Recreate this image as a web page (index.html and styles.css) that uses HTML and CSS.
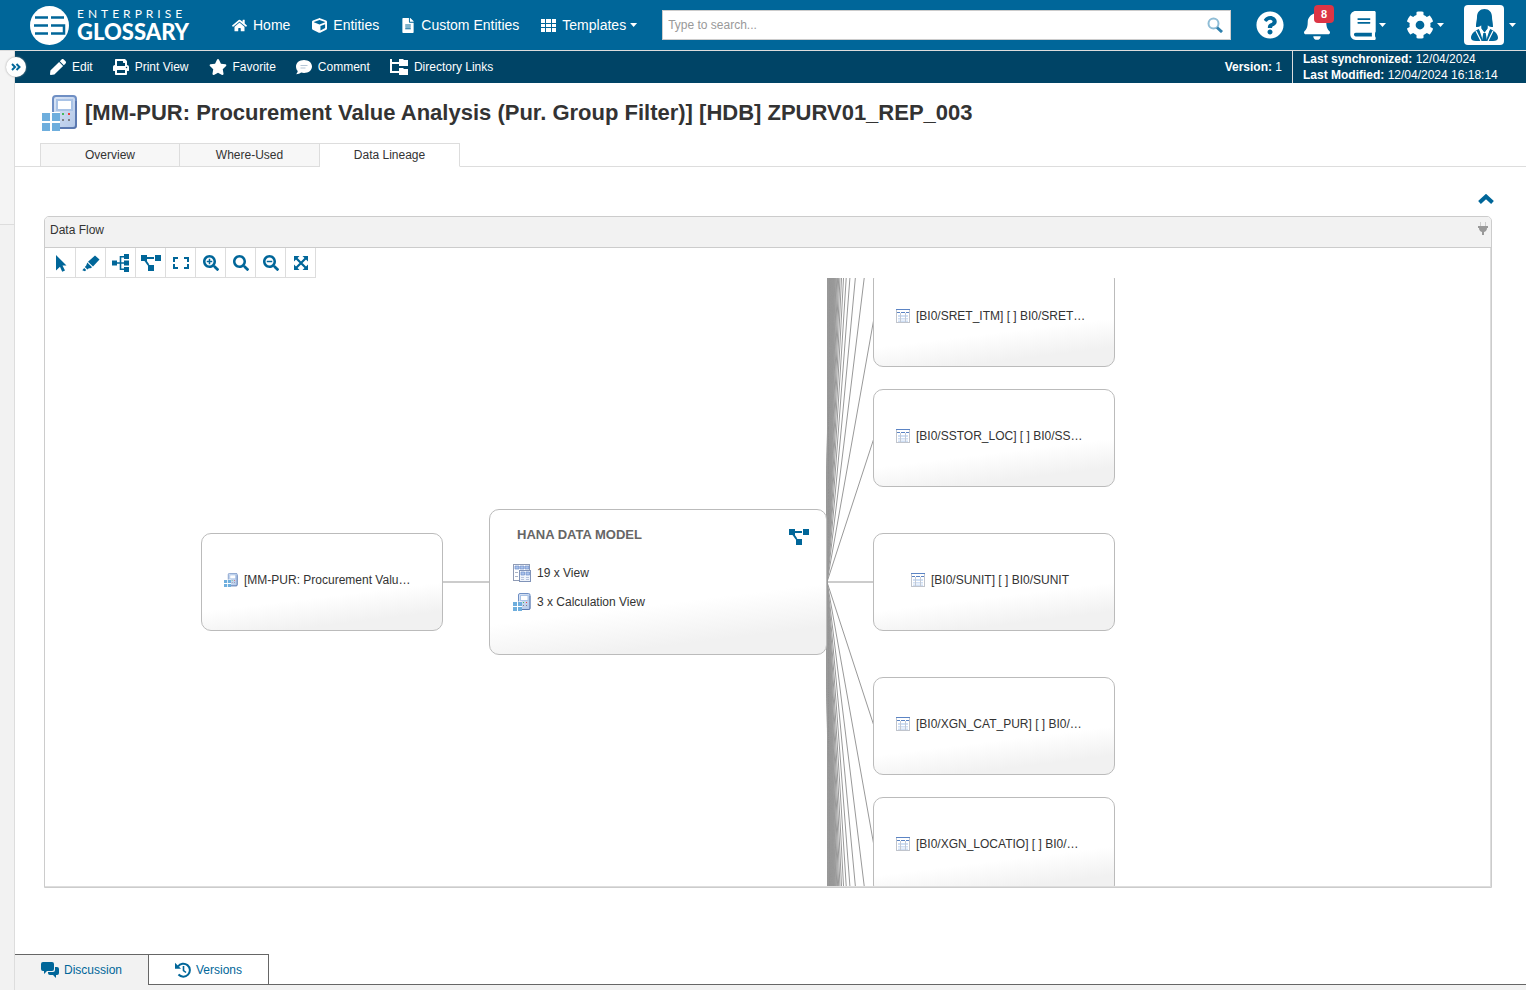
FILE: index.html
```html
<!DOCTYPE html>
<html lang="en">
<head>
<meta charset="utf-8">
<title>Enterprise Glossary - Data Lineage</title>
<link rel="stylesheet" href="styles.css">
</head>
<body>
<svg class="sprite" aria-hidden="true">
  <symbol id="i-calc" viewBox="0 0 36 36">
    <linearGradient id="calc-fill" x1="0" y1="0" x2="1" y2="1"><stop offset="0" stop-color="#dbe5f5"/><stop offset="1" stop-color="#b3c8e8"/></linearGradient>
    <rect x="11" y="1" width="23" height="32" rx="3" fill="url(#calc-fill)" stroke="#6f8fc4" stroke-width="2"/>
    <path d="M34 6V31a2 2 0 0 1-2 2H18" fill="none" stroke="#5673ab" stroke-width="1.500"/>
    <rect x="15" y="5" width="15" height="10" fill="#fff" stroke="#a9c3e6" stroke-width="2"/>
    <path d="M20 18h2v2h-2z" fill="#46b95c"/><path d="M26 18h2v2h-2z" fill="#ee3d3d"/>
    <path d="M20 24h2v2h-2zM26 24h2v2h-2z" fill="#7d8088"/>
    <path d="M0 17h18v18H0z" fill="#fff"/>
    <path d="M0 18h8v8H0zM10 18h8v8h-8zM0 28h8v8H0zM10 28h8v8h-8z" fill="#6eaedd"/>
  </symbol>
  <symbol id="i-table" viewBox="0 0 14 14">
    <rect x=".5" y=".5" width="13" height="13" fill="#fff" stroke="#c0c4cc"/>
    <path d="M0 0h14v1H0z" fill="#5b84c4"/><path d="M1 3h3v1H1zM5 3h4v1H5zM10 3h3v1h-3z" fill="#5b84c4"/>
    <path d="M2 6h2v7H2zM5 6h4v7H5zM10 6h2v7h-2z" fill="#cfdff5"/>
    <path d="M1 8.500h12M1 11h12" stroke="#fff"/><path d="M4.500 4v9M9.500 4v9" stroke="#c3c9d4"/>
  </symbol>
  <symbol id="i-view" viewBox="0 0 18 18">
    <rect x=".5" y=".5" width="16" height="16" fill="#fff" stroke="#8f9bb5"/>
    <path d="M2 2h4v3H2zM7 2h4v3H7zM12 2h4v3h-4z" fill="#a9c1ea" stroke="#6f90cb" stroke-width=".7"/>
    <path d="M2 8.500h3M2 12.500h3" stroke="#a9b3c6"/>
    <rect x="6.500" y="6.500" width="11" height="11" fill="#eef3fb" stroke="#8093b8"/>
    <path d="M8 8h3.500v3H8zM13 8h3.500v3H13z" fill="#a9c1ea" stroke="#6f90cb" stroke-width=".7"/>
    <path d="M8 13.500h3M8 15.500h3M13 13.500h3M13 15.500h3" stroke="#b6c3dc"/>
  </symbol>
  <symbol id="i-diagram" viewBox="0 0 20 18">
    <path d="M0 1h6v6H0zM14 1h6v6h-6zM7 11h6v6H7zM6 3h7v2H6z"/><path d="M4 6l3.500 5" stroke="currentColor" stroke-width="2"/>
  </symbol>
  <symbol id="i-search" viewBox="0 0 512 512"><path d="M505 442.700L405.300 343c-4.500-4.500-10.600-7-17-7H372c27.600-35.300 44-79.700 44-128C416 93.100 322.900 0 208 0S0 93.100 0 208s93.100 208 208 208c48.300 0 92.700-16.400 128-44v16.300c0 6.400 2.500 12.500 7 17l99.700 99.700c9.400 9.400 24.600 9.400 33.900 0l28.300-28.300c9.400-9.400 9.400-24.600.1-34zM208 336c-70.700 0-128-57.200-128-128 0-70.700 57.200-128 128-128 70.700 0 128 57.200 128 128 0 70.700-57.200 128-128 128z"/></symbol>
</svg>

<header class="topbar">
  <a class="brand" href="#" aria-label="Enterprise Glossary">
    <svg class="brand-mark" viewBox="0 0 39 39" aria-hidden="true">
      <circle cx="19.500" cy="19.500" r="19.500" fill="#fff"/>
      <path d="M5 11.500H18M4 19.500H18M5 27.500H18M21 11.500H34M21 19.500H34V27.500H21" fill="none" stroke="#006699" stroke-width="2.500"/>
    </svg>
    <span class="brand-text"><span class="brand-top">ENTERPRISE</span><span class="brand-bottom">GLOSSARY</span></span>
  </a>
  <nav class="nav" aria-label="Main">
    <a class="nav-link" href="#"><svg class="icon-15" viewBox="0 0 576 512" aria-hidden="true"><path d="M280.370 148.260L96 300.110V464a16 16 0 0 0 16 16l112.060-.29a16 16 0 0 0 15.920-16V368a16 16 0 0 1 16-16h64a16 16 0 0 1 16 16v95.640a16 16 0 0 0 16 16.050L464 480a16 16 0 0 0 16-16V300L295.670 148.260a12.190 12.190 0 0 0-15.300 0zM571.600 251.470L488 182.560V44.050a12 12 0 0 0-12-12h-56a12 12 0 0 0-12 12v72.610L318.470 43a48 48 0 0 0-61 0L4.340 251.470a12 12 0 0 0-1.600 16.900l25.500 31A12 12 0 0 0 45.150 301l235.220-193.740a12.190 12.190 0 0 1 15.300 0L530.900 301a12 12 0 0 0 16.900-1.600l25.500-31a12 12 0 0 0-1.700-16.930z"/></svg>Home</a>
    <a class="nav-link" href="#"><svg class="icon-15" viewBox="0 0 512 512" aria-hidden="true"><path d="M239.100 6.300l-208 78c-18.700 7-31.100 25-31.100 45v225.100c0 18.200 10.300 34.800 26.500 42.900l208 104c13.500 6.800 29.400 6.800 42.900 0l208-104c16.300-8.100 26.500-24.800 26.500-42.900V129.300c0-20-12.400-37.900-31.100-44.900l-208-78C262 2.200 250 2.200 239.100 6.300zM256 68.400l192 72v1.100l-192 78-192-78v-1.100l192-72zm32 356V275.500l160-65v133.900l-160 80z"/></svg>Entities</a>
    <a class="nav-link" href="#"><svg class="icon-file" viewBox="0 0 384 512" aria-hidden="true"><path d="M224 136V0H24C10.700 0 0 10.700 0 24v464c0 13.300 10.700 24 24 24h336c13.300 0 24-10.700 24-24V160H248c-13.200 0-24-10.800-24-24zm64 236c0 6.600-5.400 12-12 12H108c-6.600 0-12-5.400-12-12v-8c0-6.600 5.400-12 12-12h168c6.600 0 12 5.400 12 12v8zm0-64c0 6.600-5.400 12-12 12H108c-6.600 0-12-5.400-12-12v-8c0-6.600 5.400-12 12-12h168c6.600 0 12 5.400 12 12v8zm0-72v8c0 6.600-5.400 12-12 12H108c-6.600 0-12-5.400-12-12v-8c0-6.600 5.400-12 12-12h168c6.600 0 12 5.400 12 12zm96-114.100v6.100H256V0h6.100c6.400 0 12.500 2.500 17 7l97.900 98c4.500 4.500 7 10.600 7 16.900z"/></svg>Custom Entities</a>
    <button class="nav-link" type="button"><svg class="icon-15" viewBox="0 0 15 15" aria-hidden="true"><path d="M0 1h4v4H0zM5 1h5v4H5zM11 1h4v4h-4zM0 6h4v3H0zM5 6h5v3H5zM11 6h4v3h-4zM0 10h4v4H0zM5 10h5v4H5zM11 10h4v4h-4z"/></svg><span class="nav-drop">Templates<span class="caret"></span></span></button>
  </nav>
  <form class="search">
    <input class="search-input" type="search" placeholder="Type to search..." aria-label="Search">
    <button class="search-button" type="button" aria-label="Search"><svg class="icon-16" viewBox="0 0 16 16" aria-hidden="true"><circle cx="6.500" cy="6.500" r="5" fill="none" stroke="#8fbdd6" stroke-width="2"/><path d="M10 10.500l5 4.500" stroke="#2f80ad" stroke-width="3"/></svg></button>
  </form>
  <div class="tools">
    <button class="tool" type="button" aria-label="Help"><svg class="icon-28" viewBox="0 0 512 512" aria-hidden="true"><path d="M504 256c0 136.997-111.043 248-248 248S8 392.997 8 256C8 119.083 119.043 8 256 8s248 111.083 248 248zM262.655 90c-54.497 0-89.255 22.957-116.549 63.758-3.536 5.286-2.353 12.415 2.715 16.258l34.699 26.310c5.205 3.947 12.621 3.008 16.665-2.122 17.864-22.658 30.113-35.797 57.303-35.797 20.429 0 45.698 13.148 45.698 32.958 0 14.976-12.363 22.667-32.534 33.976C247.128 238.528 216 254.941 216 296v4c0 6.627 5.373 12 12 12h56c6.627 0 12-5.373 12-12v-1.333c0-28.462 83.186-29.647 83.186-106.667 0-58.002-60.165-102-116.531-102zM256 338c-25.365 0-46 20.635-46 46 0 25.364 20.635 46 46 46s46-20.636 46-46c0-25.365-20.635-46-46-46z"/></svg></button>
    <button class="tool tool-bell" type="button" aria-label="Notifications"><svg class="icon-bell" viewBox="0 0 448 512" aria-hidden="true"><path d="M224 512c35.320 0 63.970-28.650 63.970-64H160.030c0 35.350 28.650 64 63.970 64zm215.390-149.710c-19.320-20.760-55.470-51.990-55.470-154.290 0-77.700-54.480-139.900-127.940-155.160V32c0-17.670-14.320-32-31.980-32s-31.980 14.330-31.980 32v20.840C118.560 68.100 64.080 130.300 64.080 208c0 102.300-36.150 133.530-55.470 154.290-6 6.450-8.660 14.160-8.610 21.710.11 16.400 12.980 32 32.100 32h383.800c19.120 0 32-15.600 32.100-32 .05-7.550-2.610-15.270-8.610-21.710z"/></svg><span class="count">8</span></button>
    <button class="tool" type="button" aria-label="Library"><svg class="icon-book" viewBox="0 0 448 512" aria-hidden="true"><path d="M448 360V24c0-13.300-10.700-24-24-24H96C43 0 0 43 0 96v320c0 53 43 96 96 96h328c13.300 0 24-10.700 24-24v-16c0-7.500-3.500-14.300-8.900-18.700-4.200-15.400-4.200-59.300 0-74.700 5.400-4.300 8.900-11.100 8.900-18.600zM128 134c0-3.300 2.700-6 6-6h212c3.300 0 6 2.700 6 6v20c0 3.300-2.700 6-6 6H134c-3.300 0-6-2.700-6-6v-20zm0 64c0-3.300 2.700-6 6-6h212c3.300 0 6 2.700 6 6v20c0 3.300-2.700 6-6 6H134c-3.300 0-6-2.700-6-6v-20zm253.400 250H96c-17.700 0-32-14.300-32-32 0-17.600 14.400-32 32-32h285.400c-1.900 17.100-1.900 46.900 0 64z"/></svg><span class="caret"></span></button>
    <button class="tool" type="button" aria-label="Settings"><svg class="icon-28" viewBox="0 0 512 512" aria-hidden="true"><path d="M487.400 315.700l-42.600-24.600c4.300-23.200 4.300-47 0-70.200l42.600-24.600c4.900-2.800 7.100-8.600 5.500-14-11.100-35.600-30-67.800-54.700-94.600-3.800-4.100-10-5.100-14.800-2.300L380.800 110c-17.900-15.400-38.500-27.300-60.800-35.100V25.800c0-5.600-3.900-10.500-9.400-11.700-36.700-8.200-74.300-7.800-109.200 0-5.500 1.200-9.400 6.100-9.400 11.700V75c-22.200 7.900-42.800 19.800-60.800 35.100L88.700 85.500c-4.900-2.800-11-1.900-14.800 2.300-24.700 26.700-43.600 58.900-54.700 94.600-1.700 5.400.6 11.200 5.500 14L67.300 221c-4.300 23.200-4.300 47 0 70.200l-42.600 24.600c-4.900 2.800-7.100 8.600-5.500 14 11.100 35.600 30 67.800 54.700 94.600 3.800 4.100 10 5.100 14.800 2.300l42.600-24.600c17.900 15.400 38.500 27.300 60.800 35.100v49.200c0 5.600 3.900 10.500 9.400 11.700 36.700 8.200 74.300 7.800 109.200 0 5.500-1.200 9.400-6.100 9.400-11.700v-49.200c22.200-7.900 42.800-19.800 60.800-35.100l42.600 24.600c4.900 2.800 11 1.900 14.800-2.300 24.700-26.700 43.600-58.900 54.700-94.600 1.500-5.500-.7-11.300-5.600-14.100zM256 336c-44.100 0-80-35.900-80-80s35.900-80 80-80 80 35.900 80 80-35.900 80-80 80z"/></svg><span class="caret"></span></button>
    <button class="tool" type="button" aria-label="Account"><svg class="avatar" viewBox="0 0 40 40" aria-hidden="true">
      <rect width="40" height="40" rx="4" fill="#fff"/>
      <path d="M12 22c0-5 1-7 1-10 0-5 3-8 7.500-8S28 7 28 12c0 3 1 5 1 10-2 0-4 0-5-1.500h-7C16 22 14 22 12 22z" fill="#006699"/>
      <path d="M17.500 20h6v4.500l-3 4-3-4z" fill="#006699"/>
      <path d="M15 24l6 12h-9c-3 0-5-1-5-3 0-4 3-7 8-9zM26 24l-6 12h9c3 0 5-1 5-3 0-4-3-7-8-9z" fill="#006699"/>
      <path d="M15 23.500L19 36h3l4-12.500-2-1-3.500 5-3.500-5z" fill="#fff"/><path d="M19.300 28h2.400l1.300 8h-5z" fill="#006699"/><path d="M17.500 20h6v3.500l-3 4-3-4z" fill="#006699"/>
      <path d="M12 26l5 10M29 26l-5 10" stroke="#fff" stroke-width="1.200"/>
    </svg><span class="caret"></span></button>
  </div>
</header>

<div class="shell">
  <aside class="rail"><button class="rail-toggle" type="button" aria-label="Expand sidebar"><svg viewBox="0 0 10 8" aria-hidden="true"><path d="M1 1l3 3-3 3M5.500 1l3 3-3 3"/></svg></button></aside>
  <div class="page">
    <div class="actions">
      <div class="action-list">
        <button class="action" type="button"><svg class="icon-16" viewBox="0 0 512 512" aria-hidden="true"><path d="M290.740 93.240l128.020 128.020-277.990 277.990-114.140 12.600C11.350 513.540-1.560 500.620.140 485.340l12.700-114.220 277.900-277.880zm207.200-19.060l-60.110-60.110c-18.750-18.750-49.160-18.750-67.910 0l-56.550 56.550 128.020 128.020 56.550-56.550c18.750-18.760 18.750-49.160 0-67.910z"/></svg>Edit</button>
        <button class="action" type="button"><svg class="icon-16" viewBox="0 0 512 512" aria-hidden="true"><path d="M448 192V77.250c0-8.490-3.370-16.620-9.370-22.630L393.370 9.370c-6-6-14.140-9.370-22.630-9.370H96C78.330 0 64 14.330 64 32v160c-35.350 0-64 28.650-64 64v112c0 8.840 7.160 16 16 16h48v96c0 17.670 14.330 32 32 32h320c17.670 0 32-14.330 32-32v-96h48c8.840 0 16-7.160 16-16V256c0-35.350-28.650-64-64-64zm-64 256H128v-96h256v96zm0-224H128V64h192v48c0 8.840 7.160 16 16 16h48v96zm48 72c-13.250 0-24-10.750-24-24 0-13.260 10.750-24 24-24s24 10.740 24 24c0 13.250-10.750 24-24 24z"/></svg>Print View</button>
        <button class="action" type="button"><svg class="icon-18" viewBox="0 0 576 512" aria-hidden="true"><path d="M259.300 17.800L194 150.200 47.900 171.500c-26.200 3.800-36.700 36.100-17.700 54.600l105.700 103-25 145.500c-4.500 26.300 23.200 46 46.400 33.700L288 439.600l130.700 68.700c23.200 12.200 50.900-7.400 46.400-33.700l-25-145.500 105.700-103c19-18.500 8.500-50.800-17.700-54.600L382 150.200 316.700 17.800c-11.700-23.600-45.600-23.900-57.400 0z"/></svg>Favorite</button>
        <button class="action" type="button"><svg class="icon-16" viewBox="0 0 16 16" aria-hidden="true"><path d="M8 1c4.600 0 8 2.800 8 6.500S12.600 14 8 14c-1 0-2-.1-2.900-.4C3.800 14.500 2 15.200.200 15.200c.900-1 1.500-2.100 1.600-3.100C.600 10.900 0 9.300 0 7.500 0 3.800 3.400 1 8 1z"/><path d="M4.500 6.500h7M4.500 9h5" stroke="#b5c6d6" stroke-width="1"/></svg>Comment</button>
        <button class="action" type="button"><svg class="icon-18" viewBox="0 0 18 16" aria-hidden="true"><path d="M0 0h2v3h7v2H2v7h7v2H0zM9 0h4l1 1h4v6H9zM9 9h4l1 1h4v6H9z"/></svg>Directory Links</button>
      </div>
      <div class="version"><b>Version:</b> 1</div>
      <div class="stamps"><div><b>Last synchronized:</b> 12/04/2024</div><div><b>Last Modified:</b> 12/04/2024 16:18:14</div></div>
    </div>

    <div class="title-row">
      <svg class="icon-36" aria-hidden="true"><use href="#i-calc"/></svg>
      <h1 class="title">[MM-PUR: Procurement Value Analysis (Pur. Group Filter)] [HDB] ZPURV01_REP_003</h1>
    </div>
    <div class="tabs" role="tablist">
      <button class="tab" type="button" role="tab">Overview</button>
      <button class="tab" type="button" role="tab">Where-Used</button>
      <button class="tab tab-active" type="button" role="tab" aria-selected="true">Data Lineage</button>
    </div>

    <main class="content">
      <button class="collapse" type="button" aria-label="Collapse"><svg viewBox="0 0 16 10" aria-hidden="true"><path d="M1.500 8.500L8 2.500l6.500 6"/></svg></button>
      <section class="panel">
        <div class="panel-head"><h2 class="panel-title">Data Flow</h2>
          <button class="plug" type="button" aria-label="Connection"><svg viewBox="0 0 10 13" aria-hidden="true"><path d="M2 0h1v4H2zM7 0h1v4H7z" fill="#ccc"/><path d="M0 4h10v2H9c0 2-1 3.500-3 4v3H4v-3C2 9.500 1 8 1 6H0z" fill="#999"/></svg></button></div>
        <div class="toolbar">
          <button class="tb" type="button" aria-label="Select"><svg viewBox="0 0 18 18" aria-hidden="true"><path d="M4 1l10.500 10.500H10.500L13 16.500 10.200 17.800 8 12.700 4 16.500z"/></svg></button>
          <button class="tb" type="button" aria-label="Highlight"><svg viewBox="0 0 18 18" aria-hidden="true"><path d="M13 1.500l4.500 4-6.500 7-5-4.800zM5.300 8.600l4.800 4.700-1.600 1-1.700-.1-1.300 1.400-2.700-2.600 1.400-1.400zM2.200 14l2 2-1.200 1.200-2.700-.9z"/></svg></button>
          <button class="tb" type="button" aria-label="Tree layout"><svg viewBox="0 0 18 18" aria-hidden="true"><path d="M0 6.500h5v5H0zM12 0h5v5h-5zM12 6.500h5v5h-5zM12 13h5v5h-5zM5 8.200h7v1.600H5zM7.700 2h1.600v14H7.700zM9 2h3v1.500H9zM9 14.500h3V16H9z"/></svg></button>
          <button class="tb" type="button" aria-label="Diagram layout"><svg class="wide" aria-hidden="true"><use href="#i-diagram"/></svg></button>
          <button class="tb" type="button" aria-label="Fit to window"><svg viewBox="0 0 18 18" aria-hidden="true"><path d="M1 3h5v2H3v3H1zM12 3h5v5h-2V5h-3zM1 10h2v3h3v2H1zM15 10h2v5h-5v-2h3z"/></svg></button>
          <button class="tb" type="button" aria-label="Zoom in"><svg viewBox="-32 -32 576 576" aria-hidden="true"><use href="#i-search" width="512" height="512"/><path d="M184 120h48v64h64v48h-64v64h-48v-64h-64v-48h64z"/></svg></button>
          <button class="tb" type="button" aria-label="Reset zoom"><svg viewBox="-32 -32 576 576" aria-hidden="true"><use href="#i-search" width="512" height="512"/></svg></button>
          <button class="tb" type="button" aria-label="Zoom out"><svg viewBox="-32 -32 576 576" aria-hidden="true"><use href="#i-search" width="512" height="512"/><path d="M120 184h176v48H120z"/></svg></button>
          <button class="tb" type="button" aria-label="Full screen"><svg viewBox="0 0 18 18" aria-hidden="true"><path d="M2 2h5.500L2 7.500zM16 2v5.500L10.500 2zM2 16v-5.500L7.500 16zM16 16h-5.500l5.500-5.500z"/><path d="M4 4l10 10M14 4L4 14" stroke="currentColor" stroke-width="2.200"/></svg></button>
        </div>
        <div class="canvas">
          <svg class="links" aria-hidden="true"></svg>
          <div class="node node-source"><svg class="icon-14" aria-hidden="true"><use href="#i-calc"/></svg>[MM-PUR: Procurement Valu…</div>
          <div class="model">
            <div class="model-head"><h3 class="model-title">HANA DATA MODEL</h3><svg class="model-icon" aria-hidden="true"><use href="#i-diagram"/></svg></div>
            <div class="model-row"><svg class="icon-18" aria-hidden="true"><use href="#i-view"/></svg>19 x View</div>
            <div class="model-row"><svg class="icon-18" aria-hidden="true"><use href="#i-calc"/></svg>3 x Calculation View</div>
          </div>
          <div class="node target-1"><svg class="icon-14" aria-hidden="true"><use href="#i-table"/></svg>[BI0/SRET_ITM] [ ] BI0/SRET…</div>
          <div class="node target-2"><svg class="icon-14" aria-hidden="true"><use href="#i-table"/></svg>[BI0/SSTOR_LOC] [ ] BI0/SS…</div>
          <div class="node node-short target-3"><svg class="icon-14" aria-hidden="true"><use href="#i-table"/></svg>[BI0/SUNIT] [ ] BI0/SUNIT</div>
          <div class="node target-4"><svg class="icon-14" aria-hidden="true"><use href="#i-table"/></svg>[BI0/XGN_CAT_PUR] [ ] BI0/…</div>
          <div class="node target-5"><svg class="icon-14" aria-hidden="true"><use href="#i-table"/></svg>[BI0/XGN_LOCATIO] [ ] BI0/…</div>
        </div>
      </section>
    </main>

    <footer class="dock">
      <button class="dock-tab" type="button"><svg class="icon-18" viewBox="0 0 18 16" aria-hidden="true"><path d="M2 0h9a2 2 0 0 1 2 2v5a2 2 0 0 1-2 2H6l-3 3V9H2a2 2 0 0 1-2-2V2a2 2 0 0 1 2-2z"/><path d="M14 5h2a2 2 0 0 1 2 2v4a2 2 0 0 1-2 2h-1v3l-3-3H9a2 2 0 0 1-2-2v-1h5a2 2 0 0 0 2-2z"/></svg>Discussion</button>
      <button class="dock-tab dock-tab-boxed" type="button"><svg class="icon-16" viewBox="0 0 16 16" aria-hidden="true"><path d="M3 4.500A6.500 6.500 0 1 1 3.500 12.500" fill="none" stroke="currentColor" stroke-width="2"/><path d="M0 .8v6h6z"/><path d="M8.500 4v4.500l2.500 2" fill="none" stroke="currentColor" stroke-width="1.600"/></svg>Versions</button>
    </footer>
  </div>
</div>
<script src="links.js"></script>
</body>
</html>
```
FILE: styles.css
```css
* { box-sizing: border-box; }
body { margin: 0; min-height: 100vh; display: flex; flex-direction: column; background: #fff; color: #333; font: 12px/16px "Liberation Sans", Arial, sans-serif; }
button { margin: 0; padding: 0; border: 0; background: none; color: inherit; font: inherit; cursor: pointer; }
a { color: inherit; text-decoration: none; }
h1, h2, h3 { margin: 0; }
svg { display: block; flex: none; fill: currentColor; }
.sprite { position: absolute; width: 0; height: 0; }
.icon-14 { width: 14px; height: 14px; }
.icon-15 { width: 15px; height: 15px; }
.icon-16 { width: 16px; height: 16px; }
.icon-18 { width: 18px; height: 18px; }
.icon-28 { width: 28px; height: 28px; }
.icon-36 { width: 36px; height: 36px; }
.icon-file { width: 14px; height: 15px; }
.icon-bell { width: 26px; height: 30px; }
.icon-book { width: 26px; height: 29px; }
.caret { width: 7px; height: 4px; background: currentColor; clip-path: polygon(0 0, 100% 0, 50% 100%); }

.topbar { display: flex; align-items: center; height: 50px; padding: 0 10px 0 30px; background: #006699; color: #fff; }
.brand { display: flex; align-items: center; gap: 8px; width: 202px; }
.brand-mark { width: 39px; height: 39px; }
.brand-text { display: flex; flex-direction: column; font-family: Lato, sans-serif; }
.brand-top { font-size: 12px; line-height: 14px; letter-spacing: 4px; }
.brand-bottom { font-size: 22px; line-height: 22px; font-weight: 900; }
.nav { display: flex; align-items: center; gap: 22px; font-size: 14px; }
.nav-link { display: flex; align-items: center; gap: 6px; }
.nav-drop { display: flex; align-items: center; gap: 4px; }
.search { display: flex; flex: 1; height: 30px; margin: 0 25px; background: #fff; border: 1px solid #ccc; }
.search-input { flex: 1; min-width: 0; border: 0; padding: 0 5px; outline: 0; background: none; font: inherit; color: #333; appearance: none; }
.search-input::placeholder { color: #999; }
.search-button { display: grid; place-items: center; width: 30px; }
.tools { display: flex; align-items: center; gap: 20px; }
.tool { display: flex; align-items: center; gap: 3px; }
.tool-bell { position: relative; }
.count { position: absolute; top: -5px; right: -4px; width: 20px; height: 18px; border-radius: 4px; background: #dc3545; font-size: 11px; line-height: 18px; font-weight: bold; }
.avatar { width: 40px; height: 40px; margin-right: 2px; }

.shell { display: flex; flex: 1; border-top: 1px solid #ddd; }
.rail { position: relative; width: 15px; background: linear-gradient(#f4f4f4 173px, #ddd 173px, #ddd 174px, #f2f2f2 174px); border-right: 1px solid #ddd; }
.rail-toggle { position: absolute; z-index: 1; top: 6px; left: 6px; display: grid; place-items: center; width: 20px; height: 20px; border-radius: 50%; background: #fff; color: #006699; box-shadow: 0 0 2px #999; }
.rail-toggle svg { width: 10px; height: 8px; fill: none; stroke: currentColor; stroke-width: 2; }
.page { display: flex; flex: 1; flex-direction: column; min-width: 0; }

.actions { display: flex; align-items: center; height: 32px; padding-left: 35px; background: #004466; color: #fff; }
.action-list { display: flex; flex: 1; gap: 20px; }
.action { display: flex; align-items: center; gap: 6px; }
.version { padding-right: 10px; }
.stamps { width: 234px; height: 32px; padding-left: 10px; border-left: 1px solid #ddd; }

.title-row { display: flex; align-items: center; gap: 7px; padding: 12px 27px; }
.title { font-size: 22px; line-height: 34px; }
.tabs { display: flex; padding-left: 25px; box-shadow: inset 0 -1px #ddd; }
.tab { width: 140px; height: 24px; background: #f7f7f7; border: 1px solid #ddd; border-left: 0; }
.tab:first-child { border-left: 1px solid #ddd; }
.tab-active { background: #fff; border-bottom-color: #fff; }

.content { display: flex; flex: 1; flex-direction: column; padding: 25px 34px 66px 29px; }
.collapse { align-self: flex-end; height: 24px; margin-right: -2px; color: #006699; }
.collapse svg { width: 16px; height: 10px; margin-bottom: 10px; fill: none; stroke: currentColor; stroke-width: 4; }
.panel { display: flex; flex: 1; flex-direction: column; border: 1px solid #ccc; border-radius: 5px 5px 0 0; box-shadow: inset -1px -1px #ddd; overflow: hidden; }
.panel-head { display: flex; justify-content: space-between; height: 31px; padding: 5px 3px 0 5px; background: #f2f2f2; border-bottom: 1px solid #ccc; }
.panel-title { font-size: 12px; line-height: 16px; font-weight: normal; }
.plug { align-self: flex-start; }
.plug svg { width: 10px; height: 13px; }
.toolbar { display: flex; padding-left: 1px; color: #006699; }
.tb { display: grid; place-items: center; width: 30px; height: 30px; border: solid #ddd; border-width: 0 1px 1px 0; }
.tb svg { width: 18px; height: 18px; }
.tb .wide { width: 20px; }

.canvas { position: relative; flex: 1; min-height: 608px; margin: 0 1px 1px; overflow: hidden; }
.links { position: absolute; width: 100%; height: 100%; fill: none; stroke: #999; }
.node, .model { position: absolute; border: 1px solid #bbb; border-radius: 10px; background: linear-gradient(173deg, #fff 62%, #f1f1f1 85%); }
.node { display: flex; align-items: center; gap: 6px; width: 242px; height: 98px; padding: 0 0 4px 22px; white-space: nowrap; }
.node-short { justify-content: center; padding: 0 8px 4px 0; }
.node-source { left: 155px; top: 255px; }
.model { left: 443px; top: 231px; width: 338px; height: 146px; padding: 16px 17px 0 23px; }
.model-head { display: flex; justify-content: space-between; padding: 0 0 12px 4px; }
.model-title { color: #666; font-size: 13px; line-height: 18px; }
.model-icon { width: 20px; height: 18px; margin-top: 2px; color: #006699; }
.model-row { display: flex; align-items: center; gap: 6px; height: 29px; }
.target-1 { left: 827px; top: -9px; }
.target-2 { left: 827px; top: 111px; }
.target-3 { left: 827px; top: 255px; }
.target-4 { left: 827px; top: 399px; }
.target-5 { left: 827px; top: 519px; }

.dock { display: flex; height: 36px; background: linear-gradient(#fff 30px, #666 30px, #666 31px, #f2f2f2 31px); color: #006699; }
.dock-tab { display: flex; align-items: center; justify-content: center; gap: 5px; width: 133px; height: 36px; padding-bottom: 5px; background: #f2f2f2; border-top: 1px solid #666; }
.dock-tab-boxed { width: 121px; height: 31px; padding: 0; background: #fff; border: 1px solid #666; }
```
FILE: links.js
```js
const svg = document.querySelector('.links');

function link(x1, y1, x2, y2) {
  const line = document.createElementNS('http://www.w3.org/2000/svg', 'line');
  line.setAttribute('x1', x1);
  line.setAttribute('y1', y1);
  line.setAttribute('x2', x2);
  line.setAttribute('y2', y2);
  svg.append(line);
}

// Source node to model, model to the node level with it.
link(396, 304, 444, 304);
link(781, 304, 828, 304);

// Remaining targets are stacked 120px apart above and below.
for (let n = 1; n <= 120; n++) {
  const distance = 24 + 120 * n;
  link(781, 304, 828, 304 - distance);
  link(781, 304, 828, 304 + distance);
}
```
